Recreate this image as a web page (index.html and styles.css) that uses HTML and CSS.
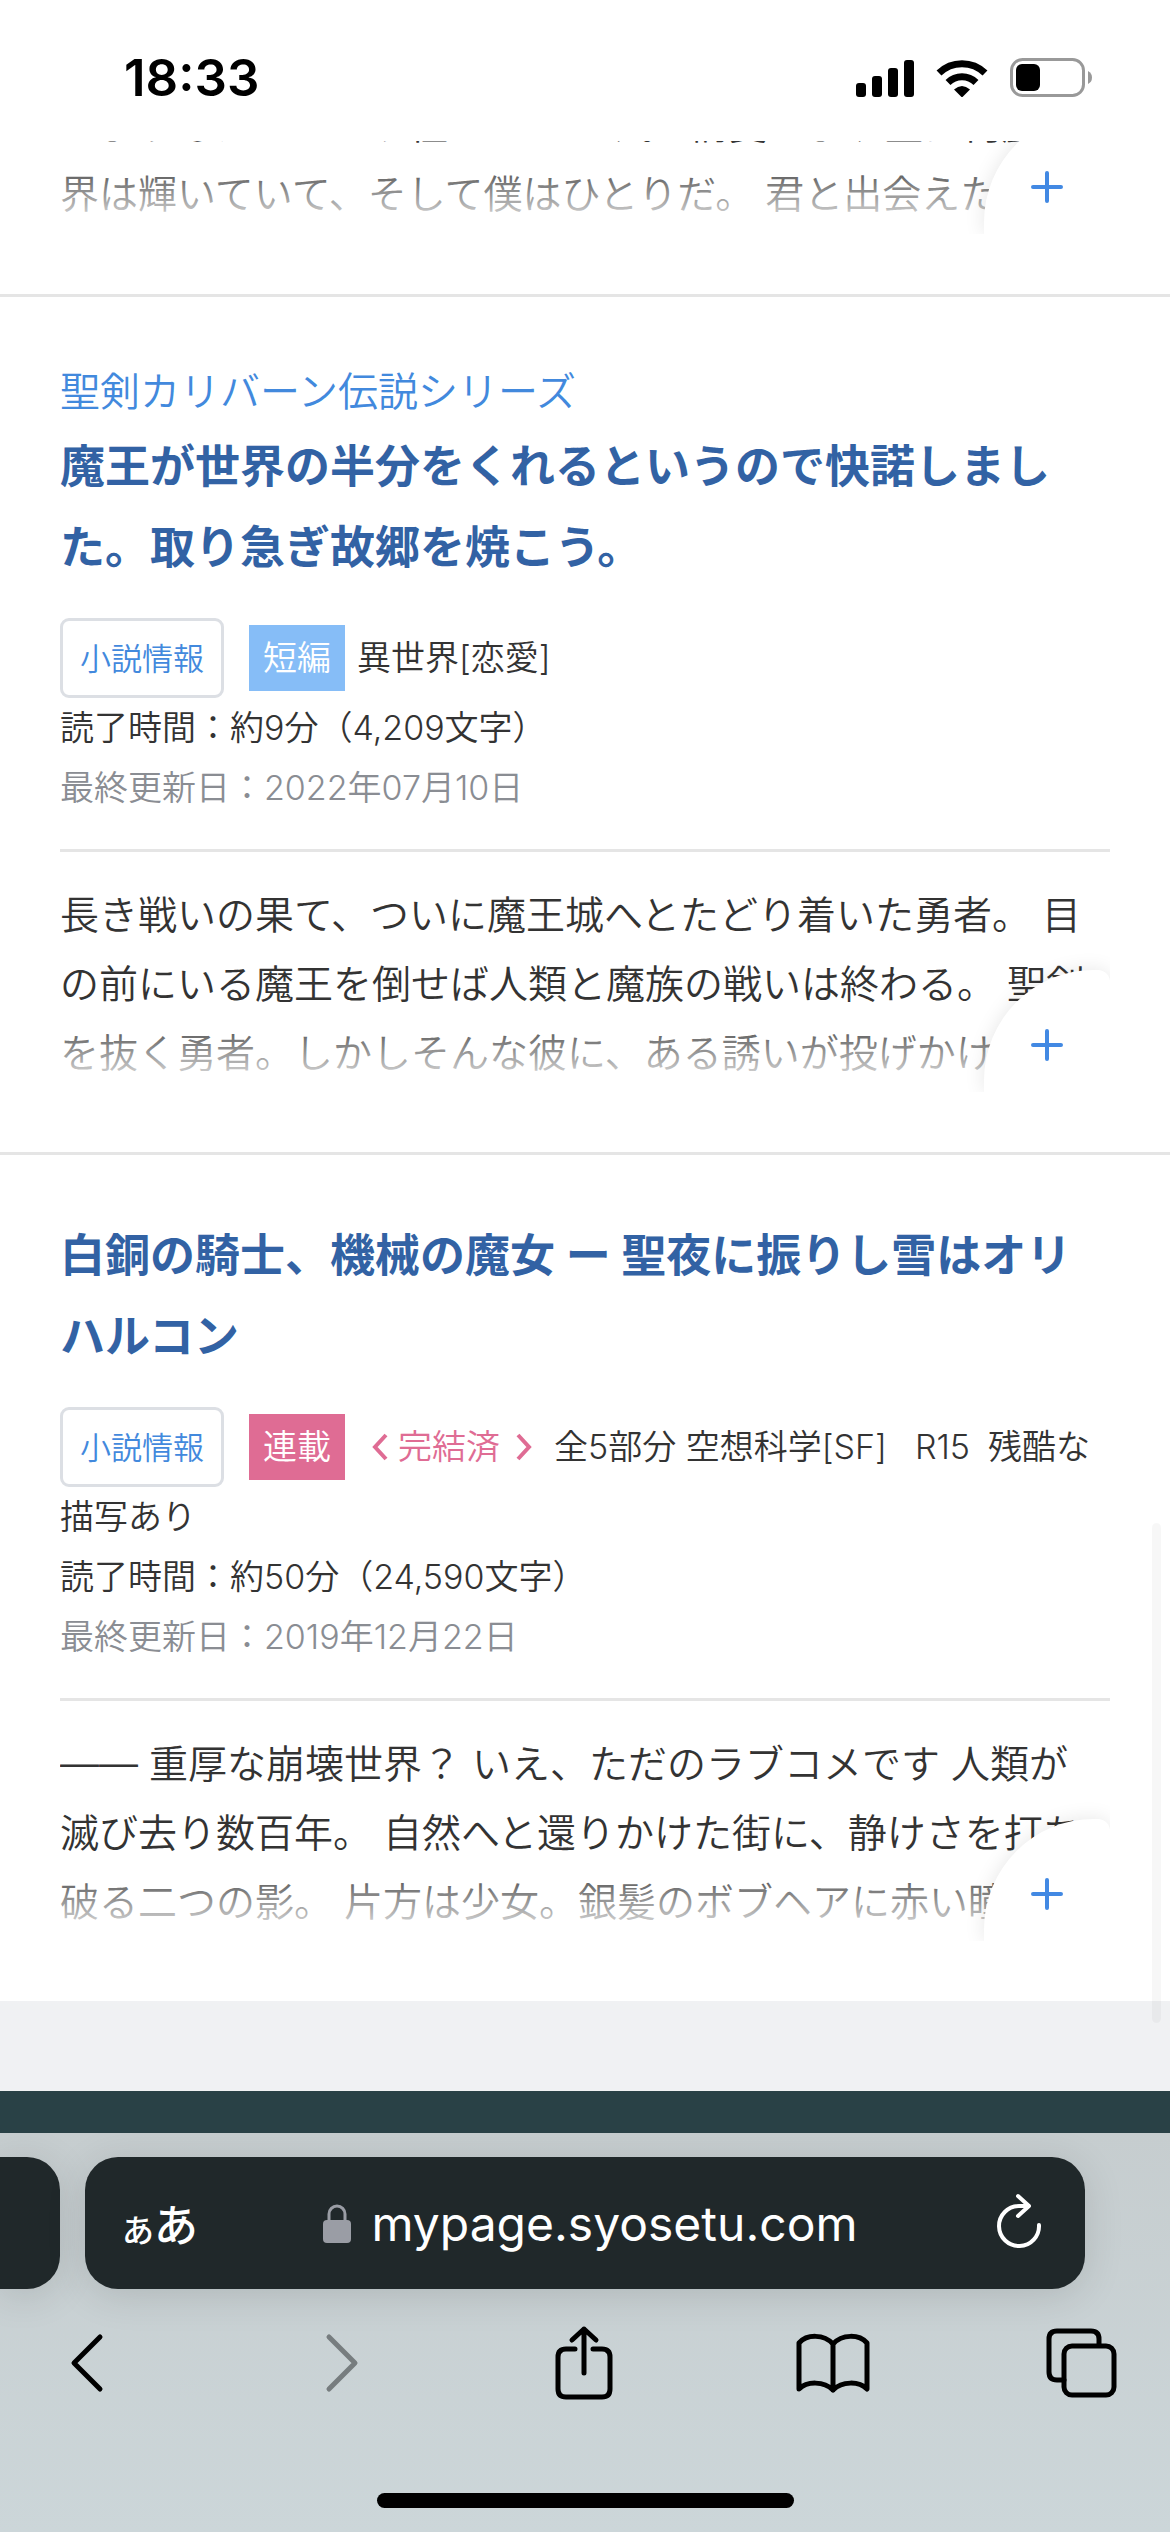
FILE: index.html
```html
<!DOCTYPE html>
<html lang="ja">
<head>
<meta charset="utf-8">
<meta name="viewport" content="width=device-width">
<title>mypage.syosetu.com</title>
<link rel="stylesheet" href="styles.css">
</head>
<body>
<header class="status">
  <span class="clock">18:33</span>
  <span class="status-icons">
    <svg width="58" height="38" viewBox="0 0 58 38"><rect y="24" width="10" height="14" rx="3"/><rect x="16" y="17" width="10" height="21" rx="3"/><rect x="32" y="9" width="10" height="29" rx="3"/><rect x="48" y="1" width="10" height="37" rx="3"/></svg>
    <svg width="52" height="38" viewBox="0 0 52 38"><g fill="none" stroke="#000" stroke-width="7"><path d="M3 14a33 33 0 0 1 46 0"/><path d="M12 23.500a20 20 0 0 1 28 0"/></g><path d="M18 30.500q8-7 16 0L26 38.500z"/></svg>
    <svg width="84" height="40" viewBox="0 0 84 40"><rect x="1.500" y="1.500" width="72" height="36" rx="11" fill="none" stroke="#999" stroke-width="3"/><rect x="6" y="6" width="24" height="27" rx="6"/><path d="M78 13q4 2 4 6.500t-4 6.500z" fill="#999"/></svg>
  </span>
</header>

<main class="page">
  <article class="novel novel-cut">
    <div class="excerpt">
      <p class="excerpt-text">いよりもたいという性でいのです。 情愛によす空は何麗<br>界は輝いていて、そして僕はひとりだ。 君と出会えた</p>
      <button class="more" aria-label="続きを表示"><svg width="32" height="32" viewBox="0 0 32 32"><path d="M16 2v28M2 16h28"/></svg></button>
    </div>
  </article>

  <article class="novel">
    <a class="series" href="#">聖剣カリバーン伝説シリーズ</a>
    <h2 class="title"><a href="#">魔王が世界の半分をくれるというので快諾しました。取り急ぎ故郷を焼こう。</a></h2>
    <div class="meta">
      <div class="kind"><a class="info" href="#">小説情報</a><span class="badge short">短編</span><span class="genre">異世界[恋愛]</span></div>
      <div>読了時間：約9分（4,209文字）</div>
      <div class="updated">最終更新日：2022年07月10日</div>
    </div>
    <div class="excerpt">
      <p class="excerpt-text">長き戦いの果て、ついに魔王城へとたどり着いた勇者。 目の前にいる魔王を倒せば人類と魔族の戦いは終わる。 聖剣<br>を抜く勇者。しかしそんな彼に、ある誘いが投げかけ</p>
      <button class="more" aria-label="続きを表示"><svg width="32" height="32" viewBox="0 0 32 32"><path d="M16 2v28M2 16h28"/></svg></button>
    </div>
  </article>

  <article class="novel">
    <h2 class="title"><a href="#">白銅の騎士、機械の魔女 ー 聖夜に振りし雪はオリハルコン</a></h2>
    <div class="meta">
      <div class="kind"><a class="info" href="#">小説情報</a><span class="badge serial">連載</span><span class="done"><svg width="16" height="28" viewBox="0 0 16 28"><path d="M14 2L3 14l11 12"/></svg>完結済<svg class="close" width="16" height="28" viewBox="0 0 16 28"><path d="M2 2l11 12L2 26"/></svg></span><span class="genre">全5部分 空想科学[SF]<span class="tag">R15</span>残酷な描写あり</span></div>
      <div>読了時間：約50分（24,590文字）</div>
      <div class="updated">最終更新日：2019年12月22日</div>
    </div>
    <div class="excerpt">
      <p class="excerpt-text">—— 重厚な崩壊世界？ いえ、ただのラブコメです 人類が<br>滅び去り数百年。 自然へと還りかけた街に、静けさを打ち<br>破る二つの影。 片方は少女。銀髪のボブヘアに赤い瞳</p>
      <button class="more" aria-label="続きを表示"><svg width="32" height="32" viewBox="0 0 32 32"><path d="M16 2v28M2 16h28"/></svg></button>
    </div>
  </article>
  <div class="gap"></div>
  <footer class="site-footer"></footer>
  <div class="scrollbar"></div>
</main>

<nav class="browser">
  <div class="tabs">
    <div class="tab-prev"></div>
    <div class="address">
      <button class="reader" aria-label="表示設定"><small>あ</small>あ</button>
      <span class="url"><svg width="28" height="40" viewBox="0 0 28 40"><rect y="17" width="28" height="23" rx="4" fill="#9a9da5"/><path d="M6 18v-7a8 8 0 0 1 16 0v7" fill="none" stroke="#9a9da5" stroke-width="3"/></svg>mypage.syosetu.com</span>
      <button class="reload" aria-label="再読み込み"><svg width="48" height="60" viewBox="0 0 48 60"><path d="M44 32A20 20 0 1 1 24 13H34M23 3L34 13L23 23"/></svg></button>
    </div>
  </div>
  <div class="tools">
    <button aria-label="戻る"><svg width="36" height="60" viewBox="0 0 36 60"><path d="M32 4L6 30l26 26"/></svg></button>
    <button class="off" aria-label="進む" disabled><svg width="36" height="60" viewBox="0 0 36 60"><path d="M4 4l26 26L4 56"/></svg></button>
    <button aria-label="共有"><svg width="60" height="76" viewBox="0 0 60 76"><path d="M21 24H12q-8 0-8 8v32q0 8 8 8h36q8 0 8-8V32q0-8-8-8H39M30 48V4M18 15L30 4l12 11"/></svg></button>
    <button aria-label="ブックマーク"><svg width="74" height="64" viewBox="0 0 74 64"><path d="M37 13C28 3 11 3 3 12V58C11 50 28 50 37 59C46 50 63 50 71 58V12C63 3 46 3 37 13V59"/></svg></button>
    <button aria-label="タブ"><svg width="72" height="70" viewBox="0 0 72 70"><path d="M18 52H11q-8 0-8-8V11q0-8 8-8h34q8 0 8 8v6"/><rect x="18" y="18" width="50" height="49" rx="8"/></svg></button>
  </div>
  <div class="home"></div>
</nav>
</body>
</html>
```
FILE: styles.css
```css
* { box-sizing: border-box; }
body {
  margin: 0;
  min-height: 100vh;
  display: flex;
  flex-direction: column;
  background: #fff;
  color: #333;
  font-family: Inter, "Noto Sans CJK JP", sans-serif;
  font-weight: 400;
}
a { color: inherit; text-decoration: none; }
button { border: 0; padding: 0; background: none; color: inherit; font: inherit; }
svg { display: block; }

.status {
  height: 141px;
  padding: 14px 76px 0 124px;
  display: flex;
  align-items: center;
  justify-content: space-between;
  color: #000;
}
.clock { font-size: 51px; font-weight: 600; }
.status-icons { display: flex; align-items: center; gap: 22px; }

.page { position: relative; background: #fff; }
.novel { padding: 60px; border-bottom: 3px solid #e5e5e5; }
.novel:nth-of-type(3) { border-bottom: 0; }
.novel-cut { height: 156px; padding-top: 0; display: flex; flex-direction: column; justify-content: flex-end; overflow: hidden; }
.novel-cut .excerpt { flex: none; height: 144px; padding-top: 0; border-top: 0; }

.series { display: block; font-size: 40px; font-weight: 350; line-height: 69px; color: #4289dd; }
.title { margin: 0 0 30px; font-size: 45px; line-height: 81px; font-weight: 700; color: #3262a4; }

.meta { font-size: 34px; font-weight: 350; line-height: 60px; margin-bottom: 31px; }
.kind { line-height: 0; }
.info {
  display: inline-block;
  height: 80px;
  padding: 0 17px;
  margin-right: 25px;
  border: 3px solid #dcdfe4;
  border-radius: 9px;
  font-size: 31px;
  line-height: 76px;
  color: #4289dd;
  vertical-align: middle;
}
.badge { display: inline-block; padding: 0 14px; margin-right: 12px; line-height: 66px; color: #fff; vertical-align: middle; }
.short { background: #86bdf7; }
.serial { background: #df6c94; }
.done { display: inline-flex; align-items: center; gap: 10px; margin: 0 22px 0 15px; line-height: 60px; color: #df6c94; vertical-align: middle; }
.done path { fill: none; stroke: currentColor; stroke-width: 4; }
.done .close { margin-left: 6px; }
.genre { line-height: 60px; vertical-align: middle; }
.tag { margin: 0 18px 0 28px; }
.updated { color: #8a8d93; }

.excerpt { position: relative; height: 243px; padding-top: 28px; border-top: 3px solid #e5e5e5; overflow: hidden; }
.excerpt-text { margin: 0; font-size: 39px; font-weight: 350; line-height: 69px; }
.excerpt::after {
  content: "";
  position: absolute;
  inset: auto 0 0;
  height: 78px;
  background: linear-gradient(rgba(255, 255, 255, 0), #fff);
}
.more {
  position: absolute;
  z-index: 1;
  right: 0;
  bottom: 0;
  width: 126px;
  height: 122px;
  padding-top: 28px;
  display: flex;
  align-items: center;
  justify-content: center;
  border-radius: 110px 12px 0 0;
  background: #fff;
  box-shadow: 0 0 20px rgba(0, 0, 0, 0.1);
}
.more path { fill: none; stroke: #4289e3; stroke-width: 4; stroke-linecap: round; }

.gap { height: 90px; background: #f0f1f3; }
.site-footer { height: 42px; background: #294146; }
.scrollbar { position: absolute; right: 9px; bottom: 110px; width: 9px; height: 500px; border-radius: 5px; background: rgba(0, 0, 0, 0.03); }

.browser { flex: 1; padding-top: 24px; display: flex; flex-direction: column; background: linear-gradient(#c6cdcf, #ccd6d9); color: #000; }
.tabs { display: flex; gap: 25px; padding-right: 85px; }
.tab-prev { width: 60px; height: 132px; border-radius: 0 33px 33px 0; background: #20282a; box-shadow: 0 6px 40px rgba(0, 0, 0, 0.12); }
.address {
  flex: 1;
  height: 132px;
  padding: 0 42px 0 37px;
  display: flex;
  align-items: center;
  justify-content: space-between;
  border-radius: 33px;
  background: #20282a;
  color: #fff;
  box-shadow: 0 6px 40px rgba(0, 0, 0, 0.12);
}
.reader { font-size: 44px; font-weight: 500; }
.reader small { font-size: 32px; }
.url { margin-right: 12px; display: flex; align-items: center; gap: 20px; font-size: 48px; }
.reload path { fill: none; stroke: #fff; stroke-width: 4; stroke-linecap: round; stroke-linejoin: round; }
.tools { height: 76px; margin-top: 36px; padding: 0 50px 0 48px; display: flex; align-items: center; justify-content: space-between; }
.tools button { width: 76px; display: flex; justify-content: center; }
.tools svg { fill: none; stroke: #000; stroke-width: 5; stroke-linecap: round; stroke-linejoin: round; }
.tools .off { padding-left: 16px; }
.tools .off svg { stroke: #777d7f; }
.home { width: 417px; height: 15px; margin: auto auto 24px; border-radius: 8px; background: #000; }
```
